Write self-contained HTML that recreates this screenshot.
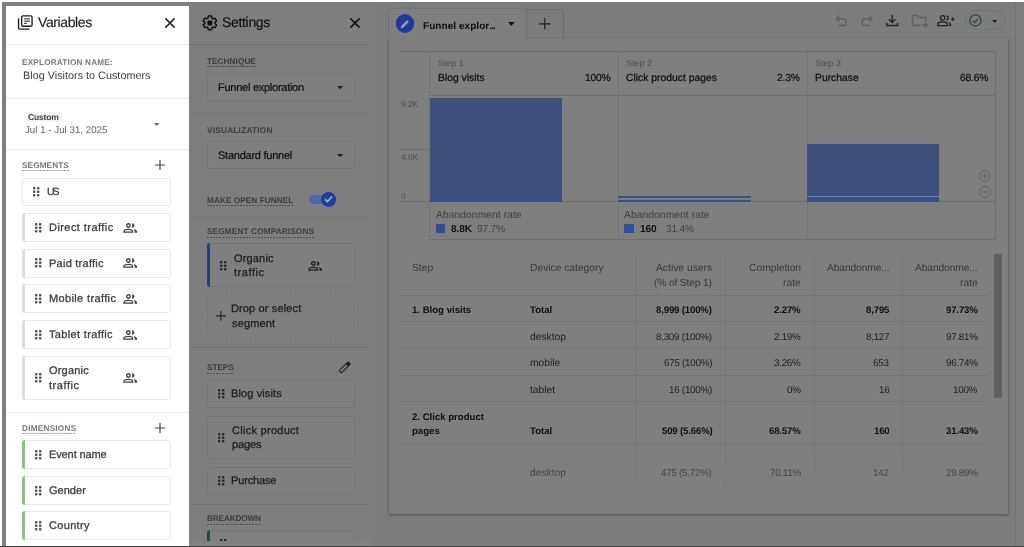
<!DOCTYPE html>
<html lang="en"><head><meta charset="utf-8"><title>Funnel exploration</title>
<style>
html,body{margin:0;padding:0;}
body{width:1024px;height:547px;position:relative;overflow:hidden;background:#fff;font-family:"Liberation Sans",sans-serif;}
.b{position:absolute;box-sizing:border-box;display:block;overflow:visible;}
.t{position:absolute;line-height:1;white-space:nowrap;}
#ui{position:absolute;left:0;top:0;width:1024px;height:547px;overflow:hidden;}
.t{will-change:transform;text-rendering:geometricPrecision;}
#bot{position:absolute;left:0;top:545.5px;width:1024px;height:1.5px;background:#3a3a3a;}
</style></head><body>
<div id="ui">
<div class="b " style="left:2.00px;top:1.50px;width:1022.00px;height:544.00px;background:#f7fafd;"></div>
<div class="b " style="left:188.50px;top:1.50px;width:184.00px;height:544.00px;background:#fdfdfd;"></div>
<div class="b " style="left:368.20px;top:1.50px;width:4.30px;height:544.00px;background:#fff;"></div>
<div class="b " style="left:1015.70px;top:1.50px;width:8.30px;height:544.00px;background:#fff;"></div>
<div class="b " style="left:1015.20px;top:1.50px;width:1.00px;height:544.00px;background:#e4e6e8;"></div>
<svg class="b" style="left:200.60px;top:14.40px;" width="17.80" height="17.80" viewBox="0 0 24 24" ><path fill="#202124" d="M13.85 22.25h-3.7c-.74 0-1.36-.54-1.45-1.27l-.27-1.89c-.27-.14-.53-.29-.79-.46l-1.8.72c-.7.26-1.47-.03-1.81-.65L2.2 15.53c-.35-.66-.2-1.44.36-1.88l1.53-1.19c-.01-.15-.02-.3-.02-.46 0-.15.01-.31.02-.46l-1.52-1.19c-.59-.45-.74-1.26-.37-1.88l1.85-3.19c.34-.62 1.11-.9 1.79-.63l1.81.73c.26-.17.52-.32.78-.46l.27-1.91c.09-.7.71-1.25 1.44-1.25h3.7c.74 0 1.36.54 1.45 1.27l.27 1.89c.27.14.53.29.79.46l1.8-.72c.71-.26 1.48.03 1.82.65l1.84 3.18c.36.66.2 1.44-.36 1.88l-1.52 1.19c.01.15.02.3.02.46s-.01.31-.02.46l1.52 1.19c.56.45.72 1.23.37 1.86l-1.86 3.22c-.34.62-1.11.9-1.8.63l-1.8-.72c-.26.17-.52.32-.78.46l-.27 1.91c-.1.68-.72 1.22-1.46 1.22zm-3.23-2h2.76l.37-2.55.53-.22c.44-.18.88-.44 1.34-.78l.45-.34 2.38.96 1.38-2.4-2.03-1.58.07-.56c.03-.26.06-.51.06-.78s-.03-.53-.06-.78l-.07-.56 2.03-1.58-1.39-2.4-2.39.96-.45-.35c-.42-.32-.87-.58-1.33-.77l-.52-.22-.37-2.55h-2.76l-.37 2.55-.53.21c-.44.19-.88.44-1.34.79l-.45.33-2.38-.95-1.39 2.39 2.03 1.58-.07.56a7 7 0 0 0-.06.79c0 .26.02.53.06.78l.07.56-2.03 1.58 1.38 2.4 2.39-.96.45.35c.43.33.86.58 1.33.77l.53.22.38 2.55z"/><circle cx="12" cy="12" r="3.5" fill="#202124"/></svg>
<div class="t " style="top:14px;line-height:16px;font-size:14px;color:#202124;letter-spacing:-0.327px;left:222.20px;-webkit-text-stroke:0.15px #202124;">Settings</div>
<svg class="b" style="left:350.30px;top:18.00px;" width="10.00" height="10.00" viewBox="0 0 10 10" ><path d="M0.4 0.4 L9.6 9.6 M9.6 0.4 L0.4 9.6" stroke="#202124" stroke-width="1.5" fill="none"/></svg>
<div class="b " style="left:188.50px;top:44.10px;width:179.70px;height:1.00px;background:#e8eaed;"></div>
<div class="t " style="top:57px;line-height:9px;font-size:8.2px;color:#747a80;font-weight:bold;letter-spacing:0.076px;left:207.10px;">TECHNIQUE</div>
<div class="b " style="left:207.10px;top:65.90px;width:48.90px;height:1.20px;background:repeating-linear-gradient(90deg,#9aa0a6 0,#9aa0a6 1.6px,transparent 1.6px,transparent 3px);"></div>
<div class="b " style="left:207.10px;top:73.40px;width:148.20px;height:28.20px;border:1px solid #e6e8ea;border-radius:3px;background:#fff;"></div>
<div class="t " style="top:82px;line-height:12px;font-size:11px;color:#202124;letter-spacing:-0.259px;left:217.70px;-webkit-text-stroke:0.2px #202124;">Funnel exploration</div>
<svg class="b" style="left:336.70px;top:86.15px;" width="6.40" height="3.30" viewBox="0 0 6.4 3.3" ><path d="M0 0 H6.4 L3.2 3.3 Z" fill="#3c4043"/></svg>
<div class="b " style="left:188.50px;top:112.80px;width:179.70px;height:1.00px;background:#e8eaed;"></div>
<div class="t " style="top:126px;line-height:9px;font-size:8.2px;color:#747a80;font-weight:bold;letter-spacing:0.262px;left:207.10px;">VISUALIZATION</div>
<div class="b " style="left:207.10px;top:140.70px;width:148.20px;height:28.80px;border:1px solid #e6e8ea;border-radius:3px;background:#fff;"></div>
<div class="t " style="top:150px;line-height:12px;font-size:11px;color:#202124;letter-spacing:-0.241px;left:218.10px;-webkit-text-stroke:0.2px #202124;">Standard funnel</div>
<svg class="b" style="left:336.70px;top:154.15px;" width="6.40" height="3.30" viewBox="0 0 6.4 3.3" ><path d="M0 0 H6.4 L3.2 3.3 Z" fill="#3c4043"/></svg>
<div class="t " style="top:196px;line-height:9px;font-size:8.2px;color:#747a80;font-weight:bold;letter-spacing:0.087px;left:207.10px;">MAKE OPEN FUNNEL</div>
<div class="b " style="left:207.10px;top:205.30px;width:86.50px;height:1.20px;background:repeating-linear-gradient(90deg,#9aa0a6 0,#9aa0a6 1.6px,transparent 1.6px,transparent 3px);"></div>
<div class="b " style="left:188.50px;top:216.70px;width:179.70px;height:1.00px;background:#e8eaed;"></div>
<div class="t " style="top:227px;line-height:9px;font-size:8.2px;color:#747a80;font-weight:bold;letter-spacing:0.162px;left:207.10px;">SEGMENT COMPARISONS</div>
<div class="b " style="left:207.10px;top:236.60px;width:107.10px;height:1.20px;background:repeating-linear-gradient(90deg,#9aa0a6 0,#9aa0a6 1.6px,transparent 1.6px,transparent 3px);"></div>
<div class="b " style="left:207.10px;top:243.40px;width:148.20px;height:44.10px;border:1px solid #e6e8ea;border-radius:3px;background:#fff;"></div>
<div class="b " style="left:207.10px;top:243.40px;width:2.90px;height:44.10px;background:#4d7de6;border-radius:3px 0 0 3px;"></div>
<svg class="b" style="left:219.90px;top:260.50px;" width="6.40" height="9.40" viewBox="0 0 6.4 9.4" ><rect x="0" y="0" width="2.4" height="2.4" rx="0.7" fill="#4d5156"/><rect x="0" y="3.5" width="2.4" height="2.4" rx="0.7" fill="#4d5156"/><rect x="0" y="7.0" width="2.4" height="2.4" rx="0.7" fill="#4d5156"/><rect x="4.0" y="0" width="2.4" height="2.4" rx="0.7" fill="#4d5156"/><rect x="4.0" y="3.5" width="2.4" height="2.4" rx="0.7" fill="#4d5156"/><rect x="4.0" y="7.0" width="2.4" height="2.4" rx="0.7" fill="#4d5156"/></svg>
<div class="t " style="top:253px;line-height:12px;font-size:11px;color:#3c4043;letter-spacing:0.164px;left:233.90px;-webkit-text-stroke:0.3px #3c4043;">Organic</div>
<div class="t " style="top:267px;line-height:12px;font-size:11px;color:#3c4043;letter-spacing:0.551px;left:233.90px;-webkit-text-stroke:0.3px #3c4043;">traffic</div>
<svg class="b" style="left:307.80px;top:260.60px;" width="14.20" height="10.00" viewBox="0 0 14.2 10" ><g fill="none" stroke="#3c4043" stroke-width="1.3"><circle cx="5.4" cy="2.5" r="1.75"/><path d="M0.95 9.2 V8.4 C0.95 7 3.6 6.3 5.3 6.3 C7 6.3 9.6 7 9.6 8.4 V9.2 Z"/></g><path d="M8.8 0.15 C12.3 0.15 12.3 4.7 8.8 4.7 C9.4 3.4 9.4 1.45 8.8 0.15 Z" fill="#3c4043"/><path d="M10.7 5.9 C12.7 6.4 14.1 7.3 14.1 8.8 V9.85 H11.7 V8.5 C11.7 7.4 11.3 6.6 10.7 5.9 Z" fill="#3c4043"/></svg>
<div class="b " style="left:207.10px;top:293.90px;width:148.20px;height:44.30px;border:1px dashed #e6e8ea;border-radius:3px;background:#fff;"></div>
<svg class="b" style="left:216.30px;top:311.10px;" width="9.80" height="9.80" viewBox="0 0 9.8 9.8" ><path d="M4.9 0 V9.8 M0 4.9 H9.8" stroke="#3c4043" stroke-width="1.1" fill="none"/></svg>
<div class="t " style="top:303px;line-height:12px;font-size:11px;color:#3c4043;letter-spacing:0.133px;left:230.70px;-webkit-text-stroke:0.3px #3c4043;">Drop or select</div>
<div class="t " style="top:318px;line-height:12px;font-size:11px;color:#3c4043;letter-spacing:0.135px;left:231.60px;-webkit-text-stroke:0.3px #3c4043;">segment</div>
<div class="b " style="left:188.50px;top:347.10px;width:179.70px;height:1.00px;background:#e8eaed;"></div>
<div class="t " style="top:363px;line-height:9px;font-size:8.2px;color:#747a80;font-weight:bold;letter-spacing:-0.022px;left:207.10px;">STEPS</div>
<div class="b " style="left:207.10px;top:373.20px;width:26.80px;height:1.20px;background:repeating-linear-gradient(90deg,#9aa0a6 0,#9aa0a6 1.6px,transparent 1.6px,transparent 3px);"></div>
<svg class="b" style="left:335.00px;top:358.00px;" width="20.00" height="20.00" viewBox="335 358 20 20" ><g transform="translate(344.7 367.4) rotate(-44)"><rect x="-6.5" y="-1.6" width="13" height="3.2" rx="1.3" fill="none" stroke="#3c4043" stroke-width="1.1"/><rect x="3" y="-1.6" width="3.5" height="3.2" rx="1" fill="#3c4043"/></g></svg>
<div class="b " style="left:207.10px;top:379.80px;width:148.20px;height:28.40px;border:1px solid #e6e8ea;border-radius:3px;background:#fff;"></div>
<svg class="b" style="left:217.50px;top:389.30px;" width="6.40" height="9.40" viewBox="0 0 6.4 9.4" ><rect x="0" y="0" width="2.4" height="2.4" rx="0.7" fill="#4d5156"/><rect x="0" y="3.5" width="2.4" height="2.4" rx="0.7" fill="#4d5156"/><rect x="0" y="7.0" width="2.4" height="2.4" rx="0.7" fill="#4d5156"/><rect x="4.0" y="0" width="2.4" height="2.4" rx="0.7" fill="#4d5156"/><rect x="4.0" y="3.5" width="2.4" height="2.4" rx="0.7" fill="#4d5156"/><rect x="4.0" y="7.0" width="2.4" height="2.4" rx="0.7" fill="#4d5156"/></svg>
<div class="t " style="top:388px;line-height:12px;font-size:11px;color:#3c4043;letter-spacing:0.118px;left:230.60px;-webkit-text-stroke:0.3px #3c4043;">Blog visits</div>
<div class="b " style="left:207.10px;top:415.70px;width:148.20px;height:43.00px;border:1px solid #e6e8ea;border-radius:3px;background:#fff;"></div>
<svg class="b" style="left:217.50px;top:432.50px;" width="6.40" height="9.40" viewBox="0 0 6.4 9.4" ><rect x="0" y="0" width="2.4" height="2.4" rx="0.7" fill="#4d5156"/><rect x="0" y="3.5" width="2.4" height="2.4" rx="0.7" fill="#4d5156"/><rect x="0" y="7.0" width="2.4" height="2.4" rx="0.7" fill="#4d5156"/><rect x="4.0" y="0" width="2.4" height="2.4" rx="0.7" fill="#4d5156"/><rect x="4.0" y="3.5" width="2.4" height="2.4" rx="0.7" fill="#4d5156"/><rect x="4.0" y="7.0" width="2.4" height="2.4" rx="0.7" fill="#4d5156"/></svg>
<div class="t " style="top:425px;line-height:12px;font-size:11px;color:#3c4043;letter-spacing:0.277px;left:231.60px;-webkit-text-stroke:0.3px #3c4043;">Click product</div>
<div class="t " style="top:439px;line-height:12px;font-size:11px;color:#3c4043;letter-spacing:-0.118px;left:231.60px;-webkit-text-stroke:0.3px #3c4043;">pages</div>
<div class="b " style="left:207.10px;top:466.50px;width:148.20px;height:28.80px;border:1px solid #e6e8ea;border-radius:3px;background:#fff;"></div>
<svg class="b" style="left:217.50px;top:476.30px;" width="6.40" height="9.40" viewBox="0 0 6.4 9.4" ><rect x="0" y="0" width="2.4" height="2.4" rx="0.7" fill="#4d5156"/><rect x="0" y="3.5" width="2.4" height="2.4" rx="0.7" fill="#4d5156"/><rect x="0" y="7.0" width="2.4" height="2.4" rx="0.7" fill="#4d5156"/><rect x="4.0" y="0" width="2.4" height="2.4" rx="0.7" fill="#4d5156"/><rect x="4.0" y="3.5" width="2.4" height="2.4" rx="0.7" fill="#4d5156"/><rect x="4.0" y="7.0" width="2.4" height="2.4" rx="0.7" fill="#4d5156"/></svg>
<div class="t " style="top:475px;line-height:12px;font-size:11px;color:#3c4043;letter-spacing:-0.153px;left:230.70px;-webkit-text-stroke:0.3px #3c4043;">Purchase</div>
<div class="b " style="left:188.50px;top:503.90px;width:179.70px;height:1.00px;background:#e8eaed;"></div>
<div class="t " style="top:514px;line-height:9px;font-size:8.2px;color:#747a80;font-weight:bold;letter-spacing:-0.127px;left:207.10px;">BREAKDOWN</div>
<div class="b " style="left:207.10px;top:523.90px;width:54.10px;height:1.20px;background:repeating-linear-gradient(90deg,#9aa0a6 0,#9aa0a6 1.6px,transparent 1.6px,transparent 3px);"></div>
<div class="b " style="left:207.10px;top:530.40px;width:148.20px;height:30.00px;border:1px solid #e6e8ea;border-radius:3px;background:#fff;"></div>
<div class="b " style="left:207.10px;top:530.40px;width:2.90px;height:30.00px;background:#34a853;border-radius:3px 0 0 3px;"></div>
<svg class="b" style="left:219.90px;top:538.90px;" width="6.40" height="9.40" viewBox="0 0 6.4 9.4" ><rect x="0" y="0" width="2.4" height="2.4" rx="0.7" fill="#4d5156"/><rect x="0" y="3.5" width="2.4" height="2.4" rx="0.7" fill="#4d5156"/><rect x="0" y="7.0" width="2.4" height="2.4" rx="0.7" fill="#4d5156"/><rect x="4.0" y="0" width="2.4" height="2.4" rx="0.7" fill="#4d5156"/><rect x="4.0" y="3.5" width="2.4" height="2.4" rx="0.7" fill="#4d5156"/><rect x="4.0" y="7.0" width="2.4" height="2.4" rx="0.7" fill="#4d5156"/></svg>
<div class="b " style="left:388.90px;top:9.40px;width:136.90px;height:32.00px;background:#fff;border-radius:4px 4px 0 0;box-shadow:0 0 2px rgba(0,0,0,.25);"></div>
<div class="b " style="left:525.80px;top:9.20px;width:38.30px;height:29.50px;background:#f8f9fa;border:1px solid #dadce0;border-bottom:none;border-radius:0 4px 0 0;"></div>
<div class="b " style="left:388.90px;top:39.00px;width:619.20px;height:475.00px;background:#fff;box-shadow:0 1px 2px rgba(0,0,0,.3),0 1px 3px 1px rgba(0,0,0,.08);"></div>
<div class="b " style="left:389.40px;top:30.00px;width:135.90px;height:12.00px;background:#fff;"></div>
<div class="t " style="top:21px;line-height:11px;font-size:10px;color:#202124;font-weight:bold;letter-spacing:0.053px;left:422.90px;">Funnel explor<span style="letter-spacing:-1.1px;margin-left:0.3px">...</span></div>
<svg class="b" style="left:508.20px;top:21.95px;" width="6.80" height="3.70" viewBox="0 0 6.8 3.7" ><path d="M0 0 H6.8 L3.4 3.7 Z" fill="#202124"/></svg>
<svg class="b" style="left:538.90px;top:18.10px;" width="11.60" height="11.60" viewBox="0 0 11.6 11.6" ><path d="M5.8 0 V11.6 M0 5.8 H11.6" stroke="#3c4043" stroke-width="1.2" fill="none"/></svg>
<svg class="b" style="left:835.00px;top:14.60px;" width="12.40" height="11.60" viewBox="0 0 12.4 11.6" ><path d="M4.2 0.8 L1.3 3.7 L4.2 6.6 M1.6 3.7 H7.6 C12.6 3.7 12.6 10.6 7.6 10.6 H3.2" fill="none" stroke="#bdc1c6" stroke-width="1.5"/></svg>
<svg class="b" style="left:861.00px;top:14.60px;" width="12.40" height="11.60" viewBox="0 0 12.4 11.6" ><path d="M8.2 0.8 L11.1 3.7 L8.2 6.6 M10.8 3.7 H4.8 C-0.2 3.7 -0.2 10.6 4.8 10.6 H9.2" fill="none" stroke="#bdc1c6" stroke-width="1.5"/></svg>
<svg class="b" style="left:886.40px;top:15.20px;" width="12.40" height="11.40" viewBox="0 0 12.4 11.4" ><path d="M6.2 0 V7.4 M2.9 4.2 L6.2 7.5 L9.5 4.2 M0.8 8 V10.6 H11.6 V8" fill="none" stroke="#4a4f55" stroke-width="1.5"/></svg>
<svg class="b" style="left:911.50px;top:14.90px;" width="16.00" height="12.60" viewBox="0 0 16 12.6" ><path d="M8.6 10.6 H0.6 V0.6 H5 L6.6 2.4 H14 V6.2 M9.6 10 H15 M12.8 7.6 L15.2 10 L12.8 12.4" fill="none" stroke="#bdc1c6" stroke-width="1.5"/></svg>
<svg class="b" style="left:937.00px;top:15.20px;" width="18.60" height="11.40" viewBox="0 0 18.6 11.4" ><g fill="none" stroke="#3c4043" stroke-width="1.3"><circle cx="5.6" cy="2.9" r="2.2"/><path d="M0.7 10.7 V9.4 C0.7 7.6 3.7 6.8 5.6 6.8 C7.5 6.8 10.5 7.6 10.5 9.4 V10.7 Z"/><path d="M9.4 0.8 C11.9 1 11.9 4.8 9.4 5"/></g><path d="M11.4 7 C13.2 7.6 14.2 8.6 14.2 10 V11.3 H12.4 V9.8 C12.4 8.6 12 7.7 11.4 7 Z" fill="#3c4043"/><path d="M15.8 1.6 L16.5 3.5 L18.4 4.2 L16.5 4.9 L15.8 6.8 L15.1 4.9 L13.2 4.2 L15.1 3.5 Z" fill="#3c4043"/></svg>
<div class="b " style="left:964.50px;top:9.90px;width:41.70px;height:20.40px;border:1px solid #e4e6e9;border-radius:11px;"></div>
<svg class="b" style="left:992.10px;top:19.60px;" width="5.40" height="2.80" viewBox="0 0 5.4 2.8" ><path d="M0 0 H5.4 L2.7 2.8 Z" fill="#3c4043"/></svg>
<div class="b " style="left:400.00px;top:50.50px;width:595.50px;height:1.00px;background:#dadce0;"></div>
<div class="b " style="left:429.90px;top:95.10px;width:565.60px;height:1.00px;background:#dadce0;"></div>
<div class="b " style="left:400.00px;top:201.40px;width:595.50px;height:1.00px;background:#dadce0;"></div>
<div class="b " style="left:429.90px;top:239.00px;width:565.60px;height:1.00px;background:#dadce0;"></div>
<div class="b " style="left:399.60px;top:148.90px;width:30.30px;height:1.00px;background:#dadce0;"></div>
<div class="b " style="left:429.40px;top:51.00px;width:1.00px;height:188.50px;background:repeating-linear-gradient(180deg,#d2d5d8 0,#d2d5d8 2px,transparent 2px,transparent 4px);"></div>
<div class="b " style="left:617.90px;top:51.00px;width:1.00px;height:188.50px;background:repeating-linear-gradient(180deg,#d2d5d8 0,#d2d5d8 2px,transparent 2px,transparent 4px);"></div>
<div class="b " style="left:806.50px;top:51.00px;width:1.00px;height:188.50px;background:repeating-linear-gradient(180deg,#d2d5d8 0,#d2d5d8 2px,transparent 2px,transparent 4px);"></div>
<div class="b " style="left:995.00px;top:51.00px;width:1.00px;height:188.50px;background:#dadce0;"></div>
<div class="t " style="top:99px;line-height:10px;font-size:8.6px;color:#9aa0a6;letter-spacing:-0.264px;left:400.70px;">9.2K</div>
<div class="t " style="top:152px;line-height:10px;font-size:8.6px;color:#9aa0a6;letter-spacing:-0.264px;left:400.70px;">4.6K</div>
<div class="t " style="top:191px;line-height:10px;font-size:8.6px;color:#9aa0a6;left:400.70px;">0</div>
<div class="t " style="top:58px;line-height:10px;font-size:9px;color:#9aa0a6;left:437.90px;">Step 1</div>
<div class="t " style="top:73px;line-height:11px;font-size:10.3px;color:#202124;letter-spacing:0.030px;left:437.90px;-webkit-text-stroke:0.25px #202124;">Blog visits</div>
<div class="t " style="top:73px;line-height:11px;font-size:10.3px;color:#202124;letter-spacing:-0.200px;right:413.40px;text-align:right;-webkit-text-stroke:0.2px #202124;">100%</div>
<div class="t " style="top:58px;line-height:10px;font-size:9px;color:#9aa0a6;left:626.40px;">Step 2</div>
<div class="t " style="top:73px;line-height:11px;font-size:10.3px;color:#202124;letter-spacing:0.030px;left:626.40px;-webkit-text-stroke:0.25px #202124;">Click product pages</div>
<div class="t " style="top:73px;line-height:11px;font-size:10.3px;color:#202124;letter-spacing:-0.200px;right:224.60px;text-align:right;-webkit-text-stroke:0.2px #202124;">2.3%</div>
<div class="t " style="top:58px;line-height:10px;font-size:9px;color:#9aa0a6;left:815.00px;">Step 3</div>
<div class="t " style="top:73px;line-height:11px;font-size:10.3px;color:#202124;letter-spacing:0.030px;left:815.00px;-webkit-text-stroke:0.25px #202124;">Purchase</div>
<div class="t " style="top:73px;line-height:11px;font-size:10.3px;color:#202124;letter-spacing:-0.200px;right:35.80px;text-align:right;-webkit-text-stroke:0.2px #202124;">68.6%</div>
<div class="t " style="top:210px;line-height:11px;font-size:10.3px;color:#767c82;letter-spacing:0.057px;left:435.90px;">Abandonment rate</div>
<div class="t " style="top:224px;line-height:11px;font-size:10.1px;color:#202124;font-weight:bold;letter-spacing:-0.100px;left:450.90px;">8.8K</div>
<div class="t " style="top:224px;line-height:11px;font-size:10.3px;color:#80868b;letter-spacing:-0.250px;left:477.20px;">97.7%</div>
<div class="t " style="top:210px;line-height:11px;font-size:10.3px;color:#767c82;letter-spacing:0.057px;left:624.40px;">Abandonment rate</div>
<div class="t " style="top:224px;line-height:11px;font-size:10.1px;color:#202124;font-weight:bold;letter-spacing:-0.100px;left:639.60px;">160</div>
<div class="t " style="top:224px;line-height:11px;font-size:10.3px;color:#80868b;letter-spacing:-0.250px;left:666.00px;">31.4%</div>
<svg class="b" style="left:978.70px;top:170.20px;" width="12.00" height="12.00" viewBox="0 0 12 12" ><circle cx="6" cy="6" r="5.3" fill="none" stroke="#bdc1c6" stroke-width="1"/><path d="M3.4 6 H8.6 M6 3.4 V8.6" stroke="#bdc1c6" stroke-width="1" fill="none"/></svg>
<svg class="b" style="left:978.70px;top:185.60px;" width="12.00" height="12.00" viewBox="0 0 12 12" ><circle cx="6" cy="6" r="5.3" fill="none" stroke="#bdc1c6" stroke-width="1"/><path d="M3.4 6 H8.6" stroke="#bdc1c6" stroke-width="1" fill="none"/></svg>
<div class="b " style="left:636.00px;top:252.00px;width:1.00px;height:236.00px;background:#ebedef;"></div>
<div class="b " style="left:724.80px;top:252.00px;width:1.00px;height:236.00px;background:#ebedef;"></div>
<div class="b " style="left:813.50px;top:252.00px;width:1.00px;height:236.00px;background:#ebedef;"></div>
<div class="b " style="left:901.60px;top:252.00px;width:1.00px;height:236.00px;background:#ebedef;"></div>
<div class="b " style="left:400.00px;top:294.50px;width:589.00px;height:1.00px;background:#ebedef;"></div>
<div class="b " style="left:400.00px;top:320.80px;width:589.00px;height:1.00px;background:#ebedef;"></div>
<div class="b " style="left:400.00px;top:347.60px;width:589.00px;height:1.00px;background:#ebedef;"></div>
<div class="b " style="left:400.00px;top:374.50px;width:589.00px;height:1.00px;background:#ebedef;"></div>
<div class="b " style="left:400.00px;top:401.40px;width:589.00px;height:1.00px;background:#ebedef;"></div>
<div class="b " style="left:400.00px;top:442.60px;width:589.00px;height:1.00px;background:#ebedef;"></div>
<div class="t " style="top:263px;line-height:11px;font-size:10.3px;color:#6b7176;left:412.30px;">Step</div>
<div class="t " style="top:263px;line-height:11px;font-size:10.3px;color:#6b7176;letter-spacing:-0.018px;left:530.20px;">Device category</div>
<div class="t " style="top:263px;line-height:11px;font-size:10.3px;color:#6b7176;right:311.70px;text-align:right;">Active users</div>
<div class="t " style="top:278px;line-height:11px;font-size:10.3px;color:#6b7176;letter-spacing:-0.170px;right:311.87px;text-align:right;">(% of Step 1)</div>
<div class="t " style="top:263px;line-height:11px;font-size:10.3px;color:#6b7176;right:223.10px;text-align:right;">Completion</div>
<div class="t " style="top:278px;line-height:11px;font-size:10.3px;color:#6b7176;right:223.10px;text-align:right;">rate</div>
<div class="t " style="top:263px;line-height:11px;font-size:10.3px;color:#6b7176;letter-spacing:-0.140px;right:134.94px;text-align:right;">Abandonme...</div>
<div class="t " style="top:263px;line-height:11px;font-size:10.3px;color:#6b7176;letter-spacing:-0.140px;right:46.64px;text-align:right;">Abandonme...</div>
<div class="t " style="top:278px;line-height:11px;font-size:10.3px;color:#6b7176;right:46.50px;text-align:right;">rate</div>
<div class="t " style="top:305px;line-height:11px;font-size:9.6px;color:#202124;font-weight:bold;left:412.30px;">1. Blog visits</div>
<div class="t " style="top:305px;line-height:11px;font-size:9.6px;color:#202124;font-weight:bold;left:530.20px;">Total</div>
<div class="t " style="top:305px;line-height:11px;font-size:9.6px;color:#202124;font-weight:bold;letter-spacing:-0.150px;right:311.85px;text-align:right;">8,999 (100%)</div>
<div class="t " style="top:305px;line-height:11px;font-size:9.6px;color:#202124;font-weight:bold;letter-spacing:-0.150px;right:223.25px;text-align:right;">2.27%</div>
<div class="t " style="top:305px;line-height:11px;font-size:9.6px;color:#202124;font-weight:bold;letter-spacing:-0.150px;right:134.95px;text-align:right;">8,795</div>
<div class="t " style="top:305px;line-height:11px;font-size:9.6px;color:#202124;font-weight:bold;letter-spacing:-0.150px;right:46.65px;text-align:right;">97.73%</div>
<div class="t " style="top:332px;line-height:11px;font-size:10.3px;color:#3c4043;left:530.20px;">desktop</div>
<div class="t " style="top:332px;line-height:11px;font-size:9.8px;color:#3c4043;letter-spacing:-0.250px;right:311.95px;text-align:right;">8,309 (100%)</div>
<div class="t " style="top:332px;line-height:11px;font-size:9.8px;color:#3c4043;letter-spacing:-0.250px;right:223.35px;text-align:right;">2.19%</div>
<div class="t " style="top:332px;line-height:11px;font-size:9.8px;color:#3c4043;letter-spacing:-0.250px;right:135.05px;text-align:right;">8,127</div>
<div class="t " style="top:332px;line-height:11px;font-size:9.8px;color:#3c4043;letter-spacing:-0.250px;right:46.75px;text-align:right;">97.81%</div>
<div class="t " style="top:358px;line-height:11px;font-size:10.3px;color:#3c4043;left:530.20px;">mobile</div>
<div class="t " style="top:358px;line-height:11px;font-size:9.8px;color:#3c4043;letter-spacing:-0.250px;right:311.95px;text-align:right;">675 (100%)</div>
<div class="t " style="top:358px;line-height:11px;font-size:9.8px;color:#3c4043;letter-spacing:-0.250px;right:223.35px;text-align:right;">3.26%</div>
<div class="t " style="top:358px;line-height:11px;font-size:9.8px;color:#3c4043;letter-spacing:-0.250px;right:135.05px;text-align:right;">653</div>
<div class="t " style="top:358px;line-height:11px;font-size:9.8px;color:#3c4043;letter-spacing:-0.250px;right:46.75px;text-align:right;">96.74%</div>
<div class="t " style="top:385px;line-height:11px;font-size:10.3px;color:#3c4043;left:530.20px;">tablet</div>
<div class="t " style="top:385px;line-height:11px;font-size:9.8px;color:#3c4043;letter-spacing:-0.250px;right:311.95px;text-align:right;">16 (100%)</div>
<div class="t " style="top:385px;line-height:11px;font-size:9.8px;color:#3c4043;letter-spacing:-0.250px;right:223.35px;text-align:right;">0%</div>
<div class="t " style="top:385px;line-height:11px;font-size:9.8px;color:#3c4043;letter-spacing:-0.250px;right:135.05px;text-align:right;">16</div>
<div class="t " style="top:385px;line-height:11px;font-size:9.8px;color:#3c4043;letter-spacing:-0.250px;right:46.75px;text-align:right;">100%</div>
<div class="t " style="top:426px;line-height:11px;font-size:9.6px;color:#202124;font-weight:bold;left:412.30px;">pages</div>
<div class="t " style="top:426px;line-height:11px;font-size:9.6px;color:#202124;font-weight:bold;left:530.20px;">Total</div>
<div class="t " style="top:426px;line-height:11px;font-size:9.6px;color:#202124;font-weight:bold;letter-spacing:-0.150px;right:311.85px;text-align:right;">509 (5.66%)</div>
<div class="t " style="top:426px;line-height:11px;font-size:9.6px;color:#202124;font-weight:bold;letter-spacing:-0.150px;right:223.25px;text-align:right;">68.57%</div>
<div class="t " style="top:426px;line-height:11px;font-size:9.6px;color:#202124;font-weight:bold;letter-spacing:-0.150px;right:134.95px;text-align:right;">160</div>
<div class="t " style="top:426px;line-height:11px;font-size:9.6px;color:#202124;font-weight:bold;letter-spacing:-0.150px;right:46.65px;text-align:right;">31.43%</div>
<div class="t " style="top:468px;line-height:11px;font-size:10.3px;color:#3c4043;left:530.20px;opacity:0.9;">desktop</div>
<div class="t " style="top:468px;line-height:11px;font-size:9.8px;color:#3c4043;letter-spacing:-0.250px;right:311.95px;text-align:right;opacity:0.9;">475 (5.72%)</div>
<div class="t " style="top:468px;line-height:11px;font-size:9.8px;color:#3c4043;letter-spacing:-0.250px;right:223.35px;text-align:right;opacity:0.9;">70.11%</div>
<div class="t " style="top:468px;line-height:11px;font-size:9.8px;color:#3c4043;letter-spacing:-0.250px;right:135.05px;text-align:right;opacity:0.9;">142</div>
<div class="t " style="top:468px;line-height:11px;font-size:9.8px;color:#3c4043;letter-spacing:-0.250px;right:46.75px;text-align:right;opacity:0.9;">29.89%</div>
<div class="t " style="top:412px;line-height:11px;font-size:9.6px;color:#202124;font-weight:bold;left:412.30px;">2. Click product</div>
<div class="b " style="left:994.00px;top:253.80px;width:7.50px;height:144.30px;background:#c1c1c1;"></div>
<div class="b " style="left:400.00px;top:452.00px;width:590.00px;height:50.00px;background:linear-gradient(180deg,rgba(255,255,255,0),rgba(255,255,255,.75));"></div>
<div class="b " style="left:2.00px;top:1.50px;width:1022.00px;height:544.00px;background:rgba(0,0,0,.5);"></div>
<div class="b " style="left:308.60px;top:194.90px;width:27.00px;height:9.30px;background:#5069a6;border-radius:4.7px;"></div>
<div class="b " style="left:321.40px;top:192.20px;width:14.70px;height:14.70px;background:#1e3f95;border-radius:50%;"></div>
<svg class="b" style="left:324.20px;top:195.30px;" width="9.00" height="8.40" viewBox="0 0 9 8.4" ><path d="M1.2 4.4 L3.5 6.7 L8 1.6" stroke="#b0b9e6" stroke-width="1.5" fill="none"/></svg>
<div class="b " style="left:395.50px;top:14.10px;width:18.80px;height:18.80px;background:#1f3a9a;border-radius:50%;"></div>
<svg class="b" style="left:400.00px;top:19.20px;" width="10.00" height="10.00" viewBox="0 0 10 10" ><path d="M0.8 9.2 L1.2 6.9 L6.4 1.7 C6.8 1.3 7.4 1.3 7.8 1.7 L8.3 2.2 C8.7 2.6 8.7 3.2 8.3 3.6 L3.1 8.8 Z" fill="#8c9cc4"/></svg>
<svg class="b" style="left:969.10px;top:14.40px;" width="12.80" height="12.80" viewBox="0 0 12.8 12.8" ><circle cx="6.4" cy="6.4" r="5.6" fill="none" stroke="#2a5034" stroke-width="1.3"/><path d="M3.6 6.6 L5.6 8.6 L9.4 4.6" fill="none" stroke="#2a5034" stroke-width="1.3"/></svg>
<div class="b " style="left:429.90px;top:98.30px;width:132.10px;height:103.60px;background:#3c4f7d;"></div>
<div class="b " style="left:618.40px;top:196.40px;width:132.40px;height:2.10px;background:#3c4f7d;"></div>
<div class="b " style="left:618.40px;top:199.60px;width:132.40px;height:2.30px;background:#33508f;"></div>
<div class="b " style="left:807.00px;top:143.60px;width:132.40px;height:58.30px;background:#3c4f7d;"></div>
<div class="b " style="left:807.00px;top:196.20px;width:132.40px;height:1.00px;background:#6f7ea3;"></div>
<div class="b " style="left:807.00px;top:197.20px;width:132.40px;height:4.70px;background:#38508a;"></div>
<div class="b " style="left:435.90px;top:223.80px;width:9.40px;height:9.30px;background:#2f4f9c;"></div>
<div class="b " style="left:624.40px;top:223.80px;width:9.40px;height:9.30px;background:#2f4f9c;"></div>
<div class="b " style="left:2.00px;top:1.50px;width:3.50px;height:544.00px;background:#808080;"></div>
<div class="b " style="left:2.00px;top:1.50px;width:186.50px;height:4.00px;background:#808080;"></div>
<div class="b " style="left:188.50px;top:541.30px;width:184.00px;height:4.40px;background:#808181;"></div>
</div>
<div class="b " style="left:5.50px;top:5.50px;width:183.00px;height:540.00px;background:#fff;"></div>
<svg class="b" style="left:17.00px;top:14.00px;" width="17.00" height="17.00" viewBox="17 14 17 17" ><g fill="none" stroke="#202124" stroke-width="1.35"><rect x="21.65" y="15.85" width="10.4" height="10.4" rx="1.2"/><path d="M18.55 18.3 V28 C18.55 28.6 19 29.05 19.6 29.05 H29.6"/><path d="M24.1 18.9 H30 M24.1 21.15 H30 M24.1 23.4 H26.8" stroke-width="1"/></g></svg>
<div class="t " style="top:14px;line-height:16px;font-size:14px;color:#202124;letter-spacing:-0.391px;left:37.50px;-webkit-text-stroke:0.15px #202124;">Variables</div>
<svg class="b" style="left:165.20px;top:18.00px;" width="10.00" height="10.00" viewBox="0 0 10 10" ><path d="M0.4 0.4 L9.6 9.6 M9.6 0.4 L0.4 9.6" stroke="#202124" stroke-width="1.5" fill="none"/></svg>
<div class="b " style="left:5.50px;top:44.10px;width:183.00px;height:1.00px;background:#e8eaed;"></div>
<div class="t " style="top:58px;line-height:9px;font-size:8.2px;color:#747a80;font-weight:bold;letter-spacing:0.189px;left:22.10px;">EXPLORATION NAME:</div>
<div class="t " style="top:70px;line-height:12px;font-size:10.8px;color:#3c4043;letter-spacing:0.018px;left:22.60px;">Blog Visitors to Customers</div>
<div class="b " style="left:5.50px;top:97.50px;width:183.00px;height:1.00px;background:#e8eaed;"></div>
<div class="b " style="left:24.50px;top:112.10px;width:37.70px;height:10.20px;background:#f1f3f4;border-radius:2px;"></div>
<div class="t " style="top:112px;line-height:10px;font-size:8.5px;color:#3c4043;font-weight:bold;letter-spacing:-0.148px;left:27.80px;">Custom</div>
<div class="t " style="top:125px;line-height:11px;font-size:9.7px;color:#5f6368;letter-spacing:0.028px;left:24.50px;">Jul 1 - Jul 31, 2025</div>
<svg class="b" style="left:153.60px;top:122.90px;" width="5.40" height="2.80" viewBox="0 0 5.4 2.8" ><path d="M0 0 H5.4 L2.7 2.8 Z" fill="#5f6368"/></svg>
<div class="b " style="left:5.50px;top:148.80px;width:183.00px;height:1.00px;background:#e8eaed;"></div>
<div class="t " style="top:161px;line-height:9px;font-size:8.2px;color:#747a80;font-weight:bold;letter-spacing:0.112px;left:22.10px;">SEGMENTS</div>
<div class="b " style="left:22.10px;top:170.20px;width:46.80px;height:1.20px;background:repeating-linear-gradient(90deg,#9aa0a6 0,#9aa0a6 1.6px,transparent 1.6px,transparent 3px);"></div>
<svg class="b" style="left:155.00px;top:160.40px;" width="10.00" height="10.00" viewBox="0 0 10 10" ><path d="M5.0 0 V10 M0 5.0 H10" stroke="#3c4043" stroke-width="1.15" fill="none"/></svg>
<div class="b " style="left:22.10px;top:177.50px;width:149.10px;height:28.50px;border:1px solid #e6e8ea;border-radius:3px;background:#fff;"></div>
<svg class="b" style="left:33.10px;top:186.70px;" width="6.40" height="9.40" viewBox="0 0 6.4 9.4" ><rect x="0" y="0" width="2.4" height="2.4" rx="0.7" fill="#4d5156"/><rect x="0" y="3.5" width="2.4" height="2.4" rx="0.7" fill="#4d5156"/><rect x="0" y="7.0" width="2.4" height="2.4" rx="0.7" fill="#4d5156"/><rect x="4.0" y="0" width="2.4" height="2.4" rx="0.7" fill="#4d5156"/><rect x="4.0" y="3.5" width="2.4" height="2.4" rx="0.7" fill="#4d5156"/><rect x="4.0" y="7.0" width="2.4" height="2.4" rx="0.7" fill="#4d5156"/></svg>
<div class="t " style="top:186px;line-height:12px;font-size:10.5px;color:#3c4043;letter-spacing:-2.186px;left:47.10px;-webkit-text-stroke:0.25px #3c4043;">US</div>
<div class="b " style="left:22.10px;top:213.10px;width:149.10px;height:29.20px;border:1px solid #e6e8ea;border-radius:3px;background:#fff;"></div>
<div class="b " style="left:22.10px;top:213.10px;width:2.90px;height:29.20px;background:#dcdee1;border-radius:3px 0 0 3px;"></div>
<svg class="b" style="left:35.30px;top:222.80px;" width="6.40" height="9.40" viewBox="0 0 6.4 9.4" ><rect x="0" y="0" width="2.4" height="2.4" rx="0.7" fill="#4d5156"/><rect x="0" y="3.5" width="2.4" height="2.4" rx="0.7" fill="#4d5156"/><rect x="0" y="7.0" width="2.4" height="2.4" rx="0.7" fill="#4d5156"/><rect x="4.0" y="0" width="2.4" height="2.4" rx="0.7" fill="#4d5156"/><rect x="4.0" y="3.5" width="2.4" height="2.4" rx="0.7" fill="#4d5156"/><rect x="4.0" y="7.0" width="2.4" height="2.4" rx="0.7" fill="#4d5156"/></svg>
<div class="t " style="top:222px;line-height:12px;font-size:11px;color:#3c4043;letter-spacing:0.440px;left:49.30px;-webkit-text-stroke:0.3px #3c4043;">Direct traffic</div>
<svg class="b" style="left:122.90px;top:222.80px;" width="14.20" height="10.00" viewBox="0 0 14.2 10" ><g fill="none" stroke="#3c4043" stroke-width="1.3"><circle cx="5.4" cy="2.5" r="1.75"/><path d="M0.95 9.2 V8.4 C0.95 7 3.6 6.3 5.3 6.3 C7 6.3 9.6 7 9.6 8.4 V9.2 Z"/></g><path d="M8.8 0.15 C12.3 0.15 12.3 4.7 8.8 4.7 C9.4 3.4 9.4 1.45 8.8 0.15 Z" fill="#3c4043"/><path d="M10.7 5.9 C12.7 6.4 14.1 7.3 14.1 8.8 V9.85 H11.7 V8.5 C11.7 7.4 11.3 6.6 10.7 5.9 Z" fill="#3c4043"/></svg>
<div class="b " style="left:22.10px;top:248.70px;width:149.10px;height:29.20px;border:1px solid #e6e8ea;border-radius:3px;background:#fff;"></div>
<div class="b " style="left:22.10px;top:248.70px;width:2.90px;height:29.20px;background:#dcdee1;border-radius:3px 0 0 3px;"></div>
<svg class="b" style="left:35.30px;top:258.40px;" width="6.40" height="9.40" viewBox="0 0 6.4 9.4" ><rect x="0" y="0" width="2.4" height="2.4" rx="0.7" fill="#4d5156"/><rect x="0" y="3.5" width="2.4" height="2.4" rx="0.7" fill="#4d5156"/><rect x="0" y="7.0" width="2.4" height="2.4" rx="0.7" fill="#4d5156"/><rect x="4.0" y="0" width="2.4" height="2.4" rx="0.7" fill="#4d5156"/><rect x="4.0" y="3.5" width="2.4" height="2.4" rx="0.7" fill="#4d5156"/><rect x="4.0" y="7.0" width="2.4" height="2.4" rx="0.7" fill="#4d5156"/></svg>
<div class="t " style="top:258px;line-height:12px;font-size:11px;color:#3c4043;letter-spacing:0.248px;left:49.30px;-webkit-text-stroke:0.3px #3c4043;">Paid traffic</div>
<svg class="b" style="left:122.90px;top:258.40px;" width="14.20" height="10.00" viewBox="0 0 14.2 10" ><g fill="none" stroke="#3c4043" stroke-width="1.3"><circle cx="5.4" cy="2.5" r="1.75"/><path d="M0.95 9.2 V8.4 C0.95 7 3.6 6.3 5.3 6.3 C7 6.3 9.6 7 9.6 8.4 V9.2 Z"/></g><path d="M8.8 0.15 C12.3 0.15 12.3 4.7 8.8 4.7 C9.4 3.4 9.4 1.45 8.8 0.15 Z" fill="#3c4043"/><path d="M10.7 5.9 C12.7 6.4 14.1 7.3 14.1 8.8 V9.85 H11.7 V8.5 C11.7 7.4 11.3 6.6 10.7 5.9 Z" fill="#3c4043"/></svg>
<div class="b " style="left:22.10px;top:284.30px;width:149.10px;height:29.20px;border:1px solid #e6e8ea;border-radius:3px;background:#fff;"></div>
<div class="b " style="left:22.10px;top:284.30px;width:2.90px;height:29.20px;background:#dcdee1;border-radius:3px 0 0 3px;"></div>
<svg class="b" style="left:35.30px;top:294.00px;" width="6.40" height="9.40" viewBox="0 0 6.4 9.4" ><rect x="0" y="0" width="2.4" height="2.4" rx="0.7" fill="#4d5156"/><rect x="0" y="3.5" width="2.4" height="2.4" rx="0.7" fill="#4d5156"/><rect x="0" y="7.0" width="2.4" height="2.4" rx="0.7" fill="#4d5156"/><rect x="4.0" y="0" width="2.4" height="2.4" rx="0.7" fill="#4d5156"/><rect x="4.0" y="3.5" width="2.4" height="2.4" rx="0.7" fill="#4d5156"/><rect x="4.0" y="7.0" width="2.4" height="2.4" rx="0.7" fill="#4d5156"/></svg>
<div class="t " style="top:293px;line-height:12px;font-size:11px;color:#3c4043;letter-spacing:0.365px;left:49.30px;-webkit-text-stroke:0.3px #3c4043;">Mobile traffic</div>
<svg class="b" style="left:122.90px;top:294.00px;" width="14.20" height="10.00" viewBox="0 0 14.2 10" ><g fill="none" stroke="#3c4043" stroke-width="1.3"><circle cx="5.4" cy="2.5" r="1.75"/><path d="M0.95 9.2 V8.4 C0.95 7 3.6 6.3 5.3 6.3 C7 6.3 9.6 7 9.6 8.4 V9.2 Z"/></g><path d="M8.8 0.15 C12.3 0.15 12.3 4.7 8.8 4.7 C9.4 3.4 9.4 1.45 8.8 0.15 Z" fill="#3c4043"/><path d="M10.7 5.9 C12.7 6.4 14.1 7.3 14.1 8.8 V9.85 H11.7 V8.5 C11.7 7.4 11.3 6.6 10.7 5.9 Z" fill="#3c4043"/></svg>
<div class="b " style="left:22.10px;top:319.90px;width:149.10px;height:29.20px;border:1px solid #e6e8ea;border-radius:3px;background:#fff;"></div>
<div class="b " style="left:22.10px;top:319.90px;width:2.90px;height:29.20px;background:#dcdee1;border-radius:3px 0 0 3px;"></div>
<svg class="b" style="left:35.30px;top:329.60px;" width="6.40" height="9.40" viewBox="0 0 6.4 9.4" ><rect x="0" y="0" width="2.4" height="2.4" rx="0.7" fill="#4d5156"/><rect x="0" y="3.5" width="2.4" height="2.4" rx="0.7" fill="#4d5156"/><rect x="0" y="7.0" width="2.4" height="2.4" rx="0.7" fill="#4d5156"/><rect x="4.0" y="0" width="2.4" height="2.4" rx="0.7" fill="#4d5156"/><rect x="4.0" y="3.5" width="2.4" height="2.4" rx="0.7" fill="#4d5156"/><rect x="4.0" y="7.0" width="2.4" height="2.4" rx="0.7" fill="#4d5156"/></svg>
<div class="t " style="top:329px;line-height:12px;font-size:11px;color:#3c4043;letter-spacing:0.346px;left:49.30px;-webkit-text-stroke:0.3px #3c4043;">Tablet traffic</div>
<svg class="b" style="left:122.90px;top:329.60px;" width="14.20" height="10.00" viewBox="0 0 14.2 10" ><g fill="none" stroke="#3c4043" stroke-width="1.3"><circle cx="5.4" cy="2.5" r="1.75"/><path d="M0.95 9.2 V8.4 C0.95 7 3.6 6.3 5.3 6.3 C7 6.3 9.6 7 9.6 8.4 V9.2 Z"/></g><path d="M8.8 0.15 C12.3 0.15 12.3 4.7 8.8 4.7 C9.4 3.4 9.4 1.45 8.8 0.15 Z" fill="#3c4043"/><path d="M10.7 5.9 C12.7 6.4 14.1 7.3 14.1 8.8 V9.85 H11.7 V8.5 C11.7 7.4 11.3 6.6 10.7 5.9 Z" fill="#3c4043"/></svg>
<div class="b " style="left:22.10px;top:355.80px;width:149.10px;height:44.10px;border:1px solid #e6e8ea;border-radius:3px;background:#fff;"></div>
<div class="b " style="left:22.10px;top:355.80px;width:2.90px;height:44.10px;background:#dcdee1;border-radius:3px 0 0 3px;"></div>
<svg class="b" style="left:35.30px;top:372.80px;" width="6.40" height="9.40" viewBox="0 0 6.4 9.4" ><rect x="0" y="0" width="2.4" height="2.4" rx="0.7" fill="#4d5156"/><rect x="0" y="3.5" width="2.4" height="2.4" rx="0.7" fill="#4d5156"/><rect x="0" y="7.0" width="2.4" height="2.4" rx="0.7" fill="#4d5156"/><rect x="4.0" y="0" width="2.4" height="2.4" rx="0.7" fill="#4d5156"/><rect x="4.0" y="3.5" width="2.4" height="2.4" rx="0.7" fill="#4d5156"/><rect x="4.0" y="7.0" width="2.4" height="2.4" rx="0.7" fill="#4d5156"/></svg>
<div class="t " style="top:365px;line-height:12px;font-size:11px;color:#3c4043;letter-spacing:0.197px;left:49.30px;-webkit-text-stroke:0.3px #3c4043;">Organic</div>
<div class="t " style="top:380px;line-height:12px;font-size:11px;color:#3c4043;letter-spacing:0.551px;left:49.30px;-webkit-text-stroke:0.3px #3c4043;">traffic</div>
<svg class="b" style="left:122.90px;top:373.00px;" width="14.20" height="10.00" viewBox="0 0 14.2 10" ><g fill="none" stroke="#3c4043" stroke-width="1.3"><circle cx="5.4" cy="2.5" r="1.75"/><path d="M0.95 9.2 V8.4 C0.95 7 3.6 6.3 5.3 6.3 C7 6.3 9.6 7 9.6 8.4 V9.2 Z"/></g><path d="M8.8 0.15 C12.3 0.15 12.3 4.7 8.8 4.7 C9.4 3.4 9.4 1.45 8.8 0.15 Z" fill="#3c4043"/><path d="M10.7 5.9 C12.7 6.4 14.1 7.3 14.1 8.8 V9.85 H11.7 V8.5 C11.7 7.4 11.3 6.6 10.7 5.9 Z" fill="#3c4043"/></svg>
<div class="b " style="left:5.50px;top:412.10px;width:183.00px;height:1.00px;background:#e8eaed;"></div>
<div class="t " style="top:424px;line-height:9px;font-size:8.2px;color:#747a80;font-weight:bold;letter-spacing:0.251px;left:22.10px;">DIMENSIONS</div>
<div class="b " style="left:22.10px;top:432.90px;width:54.20px;height:1.20px;background:repeating-linear-gradient(90deg,#9aa0a6 0,#9aa0a6 1.6px,transparent 1.6px,transparent 3px);"></div>
<svg class="b" style="left:155.00px;top:423.10px;" width="10.00" height="10.00" viewBox="0 0 10 10" ><path d="M5.0 0 V10 M0 5.0 H10" stroke="#3c4043" stroke-width="1.15" fill="none"/></svg>
<div class="b " style="left:22.10px;top:440.40px;width:149.10px;height:29.00px;border:1px solid #e6e8ea;border-radius:3px;background:#fff;"></div>
<div class="b " style="left:22.10px;top:440.40px;width:2.90px;height:29.00px;background:#8ebf88;border-radius:3px 0 0 3px;"></div>
<svg class="b" style="left:35.30px;top:450.10px;" width="6.40" height="9.40" viewBox="0 0 6.4 9.4" ><rect x="0" y="0" width="2.4" height="2.4" rx="0.7" fill="#4d5156"/><rect x="0" y="3.5" width="2.4" height="2.4" rx="0.7" fill="#4d5156"/><rect x="0" y="7.0" width="2.4" height="2.4" rx="0.7" fill="#4d5156"/><rect x="4.0" y="0" width="2.4" height="2.4" rx="0.7" fill="#4d5156"/><rect x="4.0" y="3.5" width="2.4" height="2.4" rx="0.7" fill="#4d5156"/><rect x="4.0" y="7.0" width="2.4" height="2.4" rx="0.7" fill="#4d5156"/></svg>
<div class="t " style="top:449px;line-height:12px;font-size:11px;color:#3c4043;letter-spacing:-0.111px;left:49.30px;-webkit-text-stroke:0.3px #3c4043;">Event name</div>
<div class="b " style="left:22.10px;top:475.90px;width:149.10px;height:29.00px;border:1px solid #e6e8ea;border-radius:3px;background:#fff;"></div>
<div class="b " style="left:22.10px;top:475.90px;width:2.90px;height:29.00px;background:#8ebf88;border-radius:3px 0 0 3px;"></div>
<svg class="b" style="left:35.30px;top:485.60px;" width="6.40" height="9.40" viewBox="0 0 6.4 9.4" ><rect x="0" y="0" width="2.4" height="2.4" rx="0.7" fill="#4d5156"/><rect x="0" y="3.5" width="2.4" height="2.4" rx="0.7" fill="#4d5156"/><rect x="0" y="7.0" width="2.4" height="2.4" rx="0.7" fill="#4d5156"/><rect x="4.0" y="0" width="2.4" height="2.4" rx="0.7" fill="#4d5156"/><rect x="4.0" y="3.5" width="2.4" height="2.4" rx="0.7" fill="#4d5156"/><rect x="4.0" y="7.0" width="2.4" height="2.4" rx="0.7" fill="#4d5156"/></svg>
<div class="t " style="top:485px;line-height:12px;font-size:11px;color:#3c4043;letter-spacing:0.022px;left:49.30px;-webkit-text-stroke:0.3px #3c4043;">Gender</div>
<div class="b " style="left:22.10px;top:511.40px;width:149.10px;height:29.00px;border:1px solid #e6e8ea;border-radius:3px;background:#fff;"></div>
<div class="b " style="left:22.10px;top:511.40px;width:2.90px;height:29.00px;background:#8ebf88;border-radius:3px 0 0 3px;"></div>
<svg class="b" style="left:35.30px;top:521.10px;" width="6.40" height="9.40" viewBox="0 0 6.4 9.4" ><rect x="0" y="0" width="2.4" height="2.4" rx="0.7" fill="#4d5156"/><rect x="0" y="3.5" width="2.4" height="2.4" rx="0.7" fill="#4d5156"/><rect x="0" y="7.0" width="2.4" height="2.4" rx="0.7" fill="#4d5156"/><rect x="4.0" y="0" width="2.4" height="2.4" rx="0.7" fill="#4d5156"/><rect x="4.0" y="3.5" width="2.4" height="2.4" rx="0.7" fill="#4d5156"/><rect x="4.0" y="7.0" width="2.4" height="2.4" rx="0.7" fill="#4d5156"/></svg>
<div class="t " style="top:520px;line-height:12px;font-size:11px;color:#3c4043;letter-spacing:0.331px;left:49.30px;-webkit-text-stroke:0.3px #3c4043;">Country</div>
<div id="bot"></div>
</body></html>
